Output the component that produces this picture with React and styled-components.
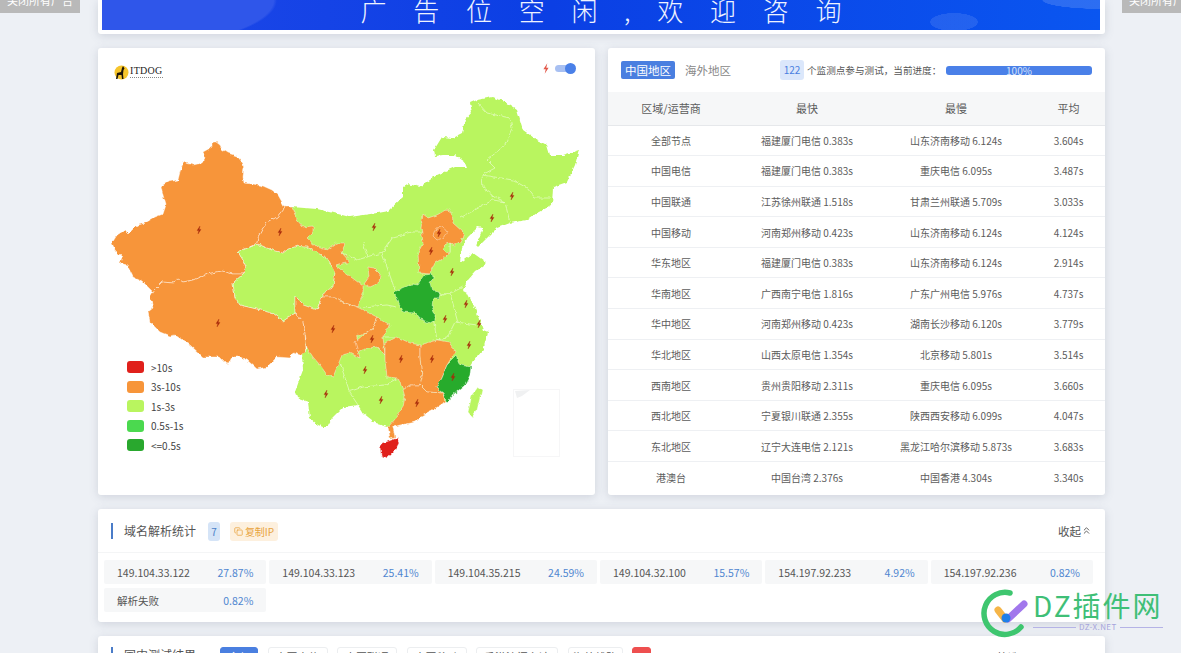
import React from 'react';
import styled, { createGlobalStyle } from 'styled-components';
import { Copy, ChevronsUp } from 'lucide-react';

const GlobalStyle = createGlobalStyle`
  html, body {
    margin: 0;
    height: 100%;
    overflow: hidden;
    background: #edf0f5;
    font-family: 'Noto Sans CJK SC', 'Noto Sans', sans-serif;
    color: #555;
  }
`;

const Page = styled.div`
  display: flex;
  flex-direction: column;
  gap: 14px;
  width: 1007px;
  margin-left: 98px;
`;

const Card = styled.div`
  background: #fff;
  border-radius: 3px;
  box-shadow: 0 2px 10px rgba(90, 100, 125, 0.2);
`;

const BannerCard = styled(Card)`
  height: 34px;
  box-sizing: border-box;
  padding: 0 5px 4px 4px;
  border-radius: 0 0 3px 3px;
`;

const Banner = styled.div`
  display: flex;
  justify-content: center;
  gap: 26.7px;
  height: 30px;
  overflow: hidden;
  color: #eef3ff;
  font-size: 26px;
  font-weight: 300;
  line-height: 20px;
  background:
    radial-gradient(ellipse 60px 9px at 1000px 0, rgba(255, 255, 255, 0.14) 98%, transparent),
    radial-gradient(ellipse 24px 9px at 852px 22px, rgba(255, 255, 255, 0.1) 98%, transparent),
    radial-gradient(ellipse 175px 50px at 0 0, #2f56ea 98%, transparent),
    linear-gradient(90deg, #1f47e8 0, #0b3fe4 45%, #0a56f0 100%);
`;

const SideButton = styled.div`
  position: absolute;
  top: -12px;
  left: ${(p) => p.$left}px;
  width: 80px;
  height: 25px;
  background: #b9b9b9;
  color: #fff;
  font-size: 11px;
  line-height: 25px;
  text-align: center;
`;

const Columns = styled.div`
  display: grid;
  grid-template-columns: 497px 497px;
  gap: 13px;
  height: 447px;
`;

const MapCard = styled(Card)`
  position: relative;
`;

const MapSvg = styled.svg`
  display: block;
  width: 497px;
  height: 447px;
`;

const Logo = styled.div`
  position: absolute;
  top: 17px;
  left: 16px;
  display: flex;
  align-items: center;
  gap: 1px;
`;

const LogoName = styled.div`
  font-family: 'Liberation Serif', serif;
  font-size: 10px;
  line-height: 10px;
  letter-spacing: 0.3px;
  color: #222;
`;

const LogoTagline = styled.div`
  height: 1px;
  margin-top: 1px;
  border-top: 1px dotted #888;
`;

const SpeedToggle = styled.div`
  position: absolute;
  top: 14px;
  left: 444px;
  display: flex;
  align-items: center;
  gap: 5px;
`;

const ToggleTrack = styled.div`
  position: relative;
  width: 18px;
  height: 7px;
  border-radius: 4px;
  background: #a8c0f2;

  &::after {
    content: '';
    position: absolute;
    top: -2px;
    right: -3px;
    width: 11px;
    height: 11px;
    border-radius: 50%;
    background: #4a80e8;
  }
`;

const Legend = styled.div`
  position: absolute;
  left: 29px;
  top: 313px;
  display: flex;
  flex-direction: column;
  gap: 7.6px;
`;

const LegendItem = styled.div`
  display: flex;
  align-items: center;
  gap: 7px;
  height: 12px;
  font-size: 10px;
  color: #444;
`;

const Swatch = styled.span`
  width: 17px;
  height: 12px;
  border-radius: 3px;
  background: ${(p) => p.$color};
`;

const PanelHead = styled.div`
  display: flex;
  align-items: center;
  height: 44px;
  padding: 0 13px;
`;

const Tab = styled.div`
  width: 54px;
  height: 18px;
  margin-right: 6px;
  border-radius: 2px;
  font-size: 11.5px;
  line-height: 18px;
  text-align: center;
  background: ${(p) => (p.$active ? '#4a7fe0' : 'transparent')};
  color: ${(p) => (p.$active ? '#fff' : '#888')};
`;

const CountBadge = styled.div`
  width: 24px;
  height: 20px;
  margin-left: 39px;
  border-radius: 3px;
  background: #dbe7fb;
  color: #4a7fe0;
  font-size: 10px;
  line-height: 20px;
  text-align: center;
`;

const ProgressLabel = styled.div`
  width: 139px;
  margin-left: 3px;
  font-size: 9.6px;
  color: #555;
  white-space: nowrap;
`;

const Progress = styled.div`
  flex: 1;
  height: 9px;
  border-radius: 3px;
  background: #4a80e8;
  color: #d5e2fb;
  font-size: 10px;
  line-height: 9px;
  text-align: center;
`;

const TableRow = styled.div`
  display: grid;
  grid-template-columns: 126px 146px 152px 73px;
  align-items: center;
  text-align: center;
  box-sizing: border-box;
  height: ${(p) => (p.$head ? '33.5px' : '30.6px')};
  border-bottom: 1px solid ${(p) => (p.$head ? '#e6e8eb' : '#eef0f3')};
  background: ${(p) => (p.$head ? '#f6f7f8' : '#fff')};
  font-size: ${(p) => (p.$head ? '11px' : '10px')};
  color: #5c5c5c;
  white-space: nowrap;
  &:last-child { border-bottom: 0; }
`;

const SectionHead = styled.div`
  display: flex;
  align-items: center;
  height: 43px;
  padding: 0 13px;
  border-bottom: 1px solid #f4f5f6;
`;

const SectionTitle = styled.div`
  border-left: 2px solid #4a7cc8;
  padding-left: 11px;
  height: 16px;
  font-size: 12px;
  line-height: 16px;
  color: #555;
`;

const Pill = styled.div`
  display: flex;
  align-items: center;
  justify-content: center;
  gap: 2px;
  width: ${(p) => p.$w}px;
  height: 19px;
  margin: 1px 0 0 ${(p) => p.$ml}px;
  border-radius: 3px;
  font-size: 10px;
  background: ${(p) => p.$bg};
  color: ${(p) => p.$fg};
`;

const Collapse = styled.div`
  display: flex;
  align-items: center;
  margin-left: auto;
  font-size: 11.5px;
  color: #555;
`;

const IpGrid = styled.div`
  display: grid;
  grid-template-columns: repeat(6, 1fr);
  gap: 4px 3px;
  padding: 7px 12px 10px 6px;
`;

const IpChip = styled.div`
  display: flex;
  justify-content: space-between;
  align-items: center;
  height: 24px;
  padding: 0 13px;
  border-radius: 2px;
  background: #f6f7f8;
  font-size: 10.5px;
  color: #555;
`;

const Percent = styled.span`
  color: #4f86d0;
`;

const ResultCard = styled(Card)`
  display: flex;
  align-items: flex-start;
  height: 60px;
  padding: 11px 13px 0;
`;

const FilterRow = styled.div`
  display: flex;
  gap: 9.5px;
  margin-left: 24px;
`;

const FilterTag = styled.div`
  width: ${(p) => p.$w}px;
  height: 20px;
  box-sizing: border-box;
  border: 1px solid ${(p) => (p.$active ? '#4a7fe0' : p.$danger ? '#ee4f4f' : '#eceef0')};
  border-radius: 3px;
  background: ${(p) => (p.$active ? '#4a7fe0' : p.$danger ? '#ee4f4f' : '#fff')};
  color: ${(p) => (p.$active || p.$danger ? '#fff' : '#555')};
  font-size: 11px;
  line-height: 18px;
  text-align: center;
  white-space: nowrap;
  overflow: hidden;
`;

const FilterLink = styled.div`
  margin-left: auto;
  margin-right: 73px;
  font-size: 11px;
  line-height: 20px;
`;

const Watermark = styled.div`
  position: absolute;
  left: 981px;
  top: 588px;
  display: flex;
  gap: 5px;
`;

const MarkName = styled.div`
  font-size: 28px;
  line-height: 34px;
  letter-spacing: 2px;
  color: #3fbf77;
  white-space: nowrap;
`;

const MarkUrl = styled.div`
  display: flex;
  align-items: center;
  gap: 3px;
  font-size: 8px;
  line-height: 10px;
  letter-spacing: 0.4px;
  color: #a6a4dc;

  &::before, &::after {
    content: '';
    flex: 1;
    border-top: 1px solid #b5b3e6;
  }
`;

const ORANGE = '#f7953a';
const LIME = '#b9f55f';
const GREEN = '#27ab2c';
const RED = '#e0201b';

// mainland outline, page coordinates (x y pairs), everything coloured sits on top of it
const MAINLAND = '292,207 317,209 330,212 350,217 377,213 388,211 403,197 403,187 408,184 420,187 437,175 455,167 467,167 465,162 455,155 443,155 435,156 434,150 442,137 452,138 462,133 465,120 472,112 470,103 477,100 493,97 505,102 517,110 523,130 537,140 547,145 550,155 563,155 579,150 575,165 567,182 553,187 552,205 537,213 527,220 510,223 497,228 478,247 476,245 483,228 478,227 468,237 462,247 460,263 473,253 487,263 475,272 468,280 463,290 467,292 475,308 483,330 488,332 483,350 472,363 453,395 420,417 388,427 377,424 363,413 358,405 343,407 332,418 327,427 323,427 318,425 310,418 308,402 297,398 295,392 300,378 303,370 302,353 307,350';

const REGIONS = [
  // xinjiang
  [ORANGE, '216,142 220,145 222,149 228,153 237,156 242,162 244,168 243,177 244,183 253,184 263,186 272,190 278,195 282,202 285,207 277,217 268,222 263,228 258,237 257,243 250,247 238,252 243,260 246,267 243,274 233,274 222,271 207,274 193,280 183,282 178,279 173,283 162,282 155,289 153,292 143,282 133,277 127,265 120,263 122,257 115,250 112,243 117,235 125,230 128,233 135,226 145,223 155,217 163,214 166,205 163,195 161,186 168,182 178,180 180,172 183,162 193,165 202,163 205,158 203,152 212,147 212,142'],
  // tibet
  [ORANGE, '153,292 155,289 162,282 173,283 178,279 183,282 193,280 207,274 222,271 233,274 243,274 233,283 235,297 240,305 257,309 273,313 283,321 295,313 303,322 305,333 306,350 300,355 293,353 290,358 277,357 267,367 257,369 247,360 240,357 232,357 228,365 220,357 203,357 190,345 175,335 170,336 160,332 150,322 148,312 153,308 150,297'],
  // qinghai
  [LIME, '238,252 250,247 258,244 272,250 283,253 288,249 297,246 307,247 327,258 335,273 333,287 323,293 317,310 303,305 295,297 295,313 283,321 273,313 257,309 240,305 235,297 233,283 243,274 246,267 243,260'],
  // gansu
  [ORANGE, '285,207 292,207 297,220 303,227 313,226 313,232 307,238 317,247 327,250 337,243 345,243 342,253 350,262 342,264 336,266 355,280 363,286 363,295 357,307 345,303 335,297 322,297 317,310 323,293 333,287 335,273 327,258 307,247 297,246 288,249 283,253 272,250 258,244 250,247 257,243 258,237 263,228 268,222 277,217'],
  // ningxia
  [ORANGE, '368,267 374,268 380,274 379,283 370,287 364,284 369,277'],
  // sichuan
  [ORANGE, '295,297 303,305 317,310 322,297 335,297 345,303 357,307 377,317 372,330 357,337 357,347 360,358 350,353 342,355 333,377 327,375 320,365 313,357 307,348 305,333 303,322 295,313'],
  // chongqing
  [ORANGE, '355,342 363,335 372,330 377,317 390,325 383,337 385,355 377,347 367,348 358,352'],
  // hebei
  [ORANGE, '423,214 428,218 437,215 447,209 452,212 453,223 464,233 462,240 455,245 450,243 450,253 443,258 435,263 430,274 419,273 418,253 423,243 421,227'],
  // tianjin
  [LIME, '446,244 450,243 450,252 447,254 442,248'],
  // beijing
  [ORANGE, '436,228 443,227 447,232 443,238 437,240 433,236'],
  // henan
  [GREEN, '418,285 425,275 432,274 433,278 430,283 432,290 440,294 439,298 433,298 432,307 435,313 435,320 430,323 420,319 415,313 403,312 397,300 394,292 403,288 412,284'],
  // hunan
  [ORANGE, '385,343 397,337 410,343 420,345 420,357 422,377 420,385 410,385 403,390 398,378 387,377 385,360'],
  // jiangxi
  [ORANGE, '420,345 437,340 450,342 455,352 447,365 442,377 436,388 443,393 427,392 420,385 422,377 420,357'],
  // guangdong
  [ORANGE, '403,390 410,385 420,385 427,392 443,393 445,402 433,410 420,417 415,422 400,425 393,427 395,437 390,438 388,427 397,417 403,407 405,397'],
  // fujian
  [GREEN, '456,356 460,365 471,367 470,375 465,385 453,395 447,403 443,393 436,388 442,377 447,365'],
  // hainan
  [RED, '383,443 397,438 399,442 395,450 387,458 381,455 380,447'],
  // taiwan
  [LIME, '478,387 482,390 477,410 472,417 468,412 472,395'],
];

const BORDERS = [
  '478,103 487,113 510,118 512,128 505,145 487,160 495,168 482,175 483,188 497,198 505,202 510,223',
  '482,175 513,180 527,188 535,198 550,198',
  '460,218 493,200 505,202',
  '422,232 412,232 393,237 382,253 395,290',
  '363,242 367,257 357,260 342,253',
  '367,257 382,253',
  '363,307 387,305 397,307',
  '378,337 397,337',
  '433,317 437,340 447,338 455,322 477,325',
  '433,295 453,292 463,287',
  '450,293 458,322',
  '433,298 450,293',
  '340,363 350,393 358,405',
  '348,392 363,387 385,385 398,378',
];

const BOLTS = [
  [199, 230], [280, 232], [218, 323], [333, 329], [372, 339], [374, 227], [439, 233], [431, 251],
  [452, 272], [492, 218], [512, 196], [365, 370], [326, 394], [381, 400], [401, 359], [432, 359],
  [417, 403], [453, 377], [469, 345], [479, 324], [466, 304], [445, 319],
];

const LEGEND = [
  ['#e0201b', '>10s'],
  ['#f7953a', '3s-10s'],
  ['#b9f55f', '1s-3s'],
  ['#4bd94f', '0.5s-1s'],
  ['#29a82e', '<=0.5s'],
];

const STATS = [
  ['全部节点', '福建厦门电信 0.383s', '山东济南移动 6.124s', '3.604s'],
  ['中国电信', '福建厦门电信 0.383s', '重庆电信 6.095s', '3.487s'],
  ['中国联通', '江苏徐州联通 1.518s', '甘肃兰州联通 5.709s', '3.033s'],
  ['中国移动', '河南郑州移动 0.423s', '山东济南移动 6.124s', '4.124s'],
  ['华东地区', '福建厦门电信 0.383s', '山东济南移动 6.124s', '2.914s'],
  ['华南地区', '广西南宁电信 1.816s', '广东广州电信 5.976s', '4.737s'],
  ['华中地区', '河南郑州移动 0.423s', '湖南长沙移动 6.120s', '3.779s'],
  ['华北地区', '山西太原电信 1.354s', '北京移动 5.801s', '3.514s'],
  ['西南地区', '贵州贵阳移动 2.311s', '重庆电信 6.095s', '3.660s'],
  ['西北地区', '宁夏银川联通 2.355s', '陕西西安移动 6.099s', '4.047s'],
  ['东北地区', '辽宁大连电信 2.121s', '黑龙江哈尔滨移动 5.873s', '3.683s'],
  ['港澳台', '中国台湾 2.376s', '中国香港 4.304s', '3.340s'],
];

const IPS = [
  ['149.104.33.122', '27.87%'],
  ['149.104.33.123', '25.41%'],
  ['149.104.35.215', '24.59%'],
  ['149.104.32.100', '15.57%'],
  ['154.197.92.233', '4.92%'],
  ['154.197.92.236', '0.82%'],
  ['解析失败', '0.82%'],
];

const FILTERS = [
  ['全部', 38, 'active'],
  ['中国电信', 60],
  ['中国联通', 60],
  ['中国移动', 60],
  ['香港澳门台湾', 82],
  ['海外线路', 55],
  ['', 19, 'danger'],
];

const BOLT_PATH = 'M1 -4 L-2 0.6 H-0.2 L-1 4 L2 -0.6 H0.2 Z';

const ChinaMap = () => (
  <MapSvg viewBox="98 48 497 447">
    <defs>
      {/* the coast and the borders are jagged in the picture */}
      <filter id="rough" x="98" y="48" width="497" height="447" filterUnits="userSpaceOnUse" colorInterpolationFilters="sRGB">
        <feTurbulence type="fractalNoise" baseFrequency="0.2" numOctaves="2" seed="4" />
        <feDisplacementMap in="SourceGraphic" scale="4" xChannelSelector="R" yChannelSelector="G" />
      </filter>
    </defs>
    <g filter="url(#rough)">
      <polygon points={MAINLAND} fill={LIME} />
      {BORDERS.map((pts) => (
        <polyline key={pts} points={pts} fill="none" stroke="#fff" strokeWidth="0.6" strokeOpacity="0.8" />
      ))}
      {REGIONS.map(([fill, pts]) => (
        <polygon key={pts} points={pts} fill={fill} stroke="#fff" strokeWidth="0.5" strokeOpacity="0.8" strokeLinejoin="round" />
      ))}
    </g>
    {BOLTS.map(([x, y]) => (
      <path key={`${x}-${y}`} d={BOLT_PATH} transform={`translate(${x} ${y})`} fill="#a82a0a" stroke="#a82a0a" strokeWidth="0.3" />
    ))}
    <rect x="513.5" y="389.5" width="46" height="67" fill="none" stroke="#f6f6f7" />
    <polygon points="515,391 530,390 522,396 517,398" fill="#f0f1f2" />
  </MapSvg>
);

const App = () => (
  <>
    <GlobalStyle />
    <SideButton $left={0}>关闭所有广告</SideButton>
    <SideButton $left={1122}>关闭所有广告</SideButton>
    <Page>
      <BannerCard>
        <Banner>
          {['广', '告', '位', '空', '闲', ',', '欢', '迎', '咨', '询'].map((c) => <span key={c}>{c}</span>)}
        </Banner>
      </BannerCard>
      <Columns>
        <MapCard>
          <ChinaMap />
          <Logo>
            <svg width="15" height="15" viewBox="0 0 15 15">
              <circle cx="7.5" cy="7.5" r="7" fill="#f6c52c" />
              <path d="M9 1 L10.5 3.5 L9.5 5 L9 9 L9.5 14 L8 14 L7.5 10 L4.5 10 L3.5 14 L2 14 L3 8 L7 7 L8 3 Z" fill="#1c1408" />
            </svg>
            <div>
              <LogoName>ITDOG</LogoName>
              <LogoTagline />
            </div>
          </Logo>
          <SpeedToggle>
            <svg width="8" height="13" viewBox="-3 -5 6 10">
              <path d={BOLT_PATH} fill="#e2584a" />
            </svg>
            <ToggleTrack />
          </SpeedToggle>
          <Legend>
            {LEGEND.map(([color, label]) => (
              <LegendItem key={label}>
                <Swatch $color={color} />
                {label}
              </LegendItem>
            ))}
          </Legend>
        </MapCard>
        <Card>
          <PanelHead>
            <Tab $active>中国地区</Tab>
            <Tab>海外地区</Tab>
            <CountBadge>122</CountBadge>
            <ProgressLabel>{'个监测点参与测试\uFF0C当前进度\uFF1A'}</ProgressLabel>
            <Progress>100%</Progress>
          </PanelHead>
          <TableRow $head>
            <span>区域/运营商</span>
            <span>最快</span>
            <span>最慢</span>
            <span>平均</span>
          </TableRow>
          {STATS.map((row) => (
            <TableRow key={row[0]}>
              {row.map((cell) => <span key={cell}>{cell}</span>)}
            </TableRow>
          ))}
        </Card>
      </Columns>
      <Card>
        <SectionHead>
          <SectionTitle>域名解析统计</SectionTitle>
          <Pill $w={12} $ml={12} $bg="#d5e4f7" $fg="#4a7fc8">7</Pill>
          <Pill $w={48} $ml={10} $bg="#fdf0de" $fg="#e8a33d">
            <Copy size={9} />
            复制IP
          </Pill>
          <Collapse>
            收起
            <ChevronsUp size={11} />
          </Collapse>
        </SectionHead>
        <IpGrid>
          {IPS.map(([ip, share]) => (
            <IpChip key={ip}>
              {ip}
              <Percent>{share}</Percent>
            </IpChip>
          ))}
        </IpGrid>
      </Card>
      <ResultCard>
        <SectionTitle>国内测试结果</SectionTitle>
        <FilterRow>
          {FILTERS.map(([label, w, kind]) => (
            <FilterTag key={w + label} $w={w} $active={kind === 'active'} $danger={kind === 'danger'}>{label}</FilterTag>
          ))}
        </FilterRow>
        <FilterLink>筛选</FilterLink>
      </ResultCard>
    </Page>
    <Watermark>
      <svg width="47" height="50" viewBox="0 0 47 50">
        <path d="M29 5 A21 21 0 1 0 40 39" fill="none" stroke="#3ec66f" strokeWidth="5.5" strokeLinecap="round" />
        <path d="M17 22 L24 31" stroke="#f5b548" strokeWidth="7" strokeLinecap="round" />
        <path d="M27 31 L43 16" stroke="#a177ec" strokeWidth="7" strokeLinecap="round" />
        <circle cx="25" cy="30" r="4.5" fill="#1f7fe8" />
      </svg>
      <div>
        <MarkName>DZ插件网</MarkName>
        <MarkUrl>DZ-X.NET</MarkUrl>
      </div>
    </Watermark>
  </>
);

export default App;
